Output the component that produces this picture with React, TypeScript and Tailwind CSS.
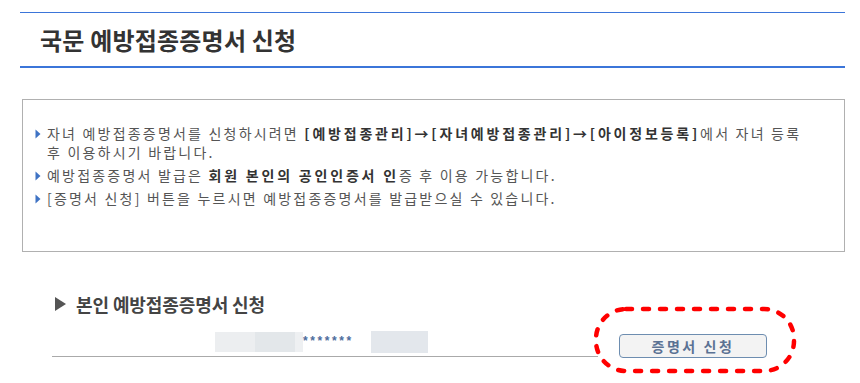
import React from "react";

const KR = { fontFamily: '"Noto Sans CJK KR", "Noto Sans", sans-serif' } as const;

function Bullet() {
  return (
    <svg width="6" height="10" viewBox="0 0 6 10" className="shrink-0 mt-[5px]">
      <path d="M0.5 0.5 L5.5 5 L0.5 9.5 Z" fill="#3f73c4" />
    </svg>
  );
}

export default function App() {
  return (
    <div className="w-[860px] h-[383px] bg-white overflow-hidden relative" style={KR}>
      <div className="ml-[20px] w-[825px] pt-[12px]">
        {/* Header */}
        <div className="border-t border-[#3b75d9] border-b-[2px] border-b-[#3b75d9] h-[56px] flex items-center pl-[20px]">
          <h1 className="text-[24px] font-bold text-[#333] tracking-[0.2px] leading-none">
            국문 예방접종증명서 신청
          </h1>
        </div>

        {/* Info box */}
        <div className="mt-[31px] ml-[2px] h-[153px] border border-[#b0b0b0] pt-[24px] pl-[12px] text-[14px] text-[#555] tracking-[2.2px] leading-[19px]">
          <div className="flex gap-[6px]">
            <Bullet />
            <p>
              자녀 예방접종증명서를 신청하시려면{" "}
              <b className="text-[#333] tracking-[2.8px]">[예방접종관리]→[자녀예방접종관리]→[아이정보등록]</b>에서 자녀 등록
              <br />후 이용하시기 바랍니다.
            </p>
          </div>
          <div className="flex gap-[6px] mt-[4px]">
            <Bullet />
            <p>
              예방접종증명서 발급은 <b className="text-[#333] tracking-[2.8px]">회원 본인의 공인인증서 인</b>증 후 이용 가능합니다.
            </p>
          </div>
          <div className="flex gap-[6px] mt-[4px]">
            <Bullet />
            <p>[증명서 신청] 버튼을 누르시면 예방접종증명서를 발급받으실 수 있습니다.</p>
          </div>
        </div>

        {/* Section */}
        <div className="mt-[43px] ml-[35px] flex items-center gap-[10px]">
          <svg width="11" height="14" viewBox="0 0 11 14">
            <path d="M0 0 L11 7 L0 14 Z" fill="#555" />
          </svg>
          <h2 className="text-[18px] font-bold text-[#444] tracking-[-0.1px] leading-none">본인 예방접종증명서 신청</h2>
        </div>

        <div className="relative mt-[16px] ml-[32px] flex items-end">
          <div className="w-[546px] h-[28px] border-b border-[#aaaaaa] flex items-start">
            <div className="ml-[163px] mt-[3px] w-[40px] h-[20px] bg-[#eceef0]" />
            <div className="mt-[3px] w-[40px] h-[20px] bg-[#e3e7ea]" />
            <div className="mt-[3px] w-[8px] h-[20px] bg-[#eef0f2]" />
            <div
              className="mt-[6px] w-[68px] text-[12px] font-bold text-[#4d6c9c] tracking-[2.6px] leading-none"
              style={{ fontFamily: '"Liberation Sans", Arial, sans-serif' }}
            >
              *******
            </div>
            <div className="mt-[2px] w-[57px] h-[22px] bg-[#e3e7ec]" />
          </div>
          <button className="ml-[21px] mb-[-1px] w-[148px] h-[24px] rounded-[4px] border border-[#6d8db0] bg-[#f3f3f3] text-[14px] font-bold text-[#5b7294] tracking-[2.6px] leading-none flex items-center justify-center">
            증명서 신청
          </button>
          <svg
            className="absolute left-[541px] top-[-23px]"
            width="204"
            height="68"
            viewBox="0 0 204 68"
          >
            <rect
              x="3"
              y="3"
              width="198"
              height="62"
              rx="30"
              fill="none"
              stroke="#ff0000"
              strokeWidth="4.5"
              strokeDasharray="6 11"
              strokeLinecap="round"
            />
          </svg>
        </div>
      </div>
    </div>
  );
}
